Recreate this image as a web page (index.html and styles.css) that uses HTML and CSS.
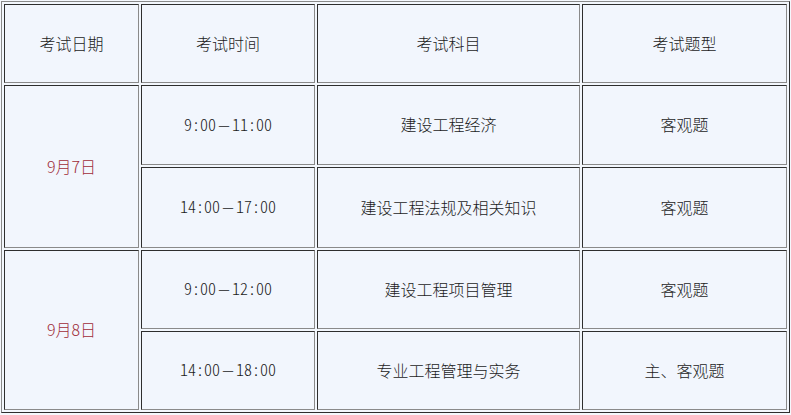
FILE: index.html
```html
<!DOCTYPE html>
<html lang="zh-CN">
<head>
<meta charset="utf-8">
<title>考试安排</title>
<link rel="stylesheet" href="styles.css">
</head>
<body>
<table class="exam">
  <colgroup>
    <col class="c1"><col class="c2"><col class="c3"><col class="c4">
  </colgroup>
  <tr class="r-head">
    <td>考试日期</td>
    <td>考试时间</td>
    <td>考试科目</td>
    <td>考试题型</td>
  </tr>
  <tr class="r1">
    <td rowspan="2" class="date">9月7日</td>
    <td class="time">9:00<span class="dash">－</span>11:00</td>
    <td>建设工程经济</td>
    <td>客观题</td>
  </tr>
  <tr class="r2">
    <td class="time">14:00<span class="dash">－</span>17:00</td>
    <td>建设工程法规及相关知识</td>
    <td>客观题</td>
  </tr>
  <tr class="r3">
    <td rowspan="2" class="date">9月8日</td>
    <td class="time">9:00<span class="dash">－</span>12:00</td>
    <td>建设工程项目管理</td>
    <td>客观题</td>
  </tr>
  <tr class="r4">
    <td class="time">14:00<span class="dash">－</span>18:00</td>
    <td>专业工程管理与实务</td>
    <td>主、客观题</td>
  </tr>
</table>
</body>
</html>
```

FILE: styles.css
```css
html, body {
  margin: 0;
  padding: 0;
  background: #f5f8fd;
}

.exam {
  box-sizing: border-box;
  margin: 1px 0 0 1px;
  width: 789px;
  table-layout: fixed;
  border-collapse: separate;
  border-spacing: 2px;
  background: #f3f7fd;
  border: 1px solid;
  border-color: #8a8a8a #2e2e2e #2e2e2e #8a8a8a;
  font-family: "Noto Sans CJK SC", "Noto Sans", sans-serif;
  font-size: 16px;
  font-weight: 300;
  color: #1c1c1c;
}

.c1 { width: 135px; }
.c2 { width: 174px; }
.c3 { width: 263px; }
.c4 { width: 205px; }

.exam td {
  box-sizing: border-box;
  padding: 0 0 2px 0;
  text-align: center;
  vertical-align: middle;
  background: #f2f6fd;
  border: 1px solid;
  border-color: #2e2e2e #8a8a8a #8a8a8a #2e2e2e;
  line-height: 20px;
}

.r-head td { height: 79px; }
.r1 td { height: 80px; }
.r2 td { height: 81px; }
.r3 td { height: 79px; }
.r4 td { height: 79px; }

.exam td.date {
  color: #a02c38;
}

.time {
  font-family: "Noto Sans CJK SC", sans-serif;
  font-feature-settings: "hwid" 1;
  font-size: 16px;
}

.dash {
  display: inline-block;
  width: 16px;
  font-feature-settings: normal;
  font-size: 14px;
}
```
